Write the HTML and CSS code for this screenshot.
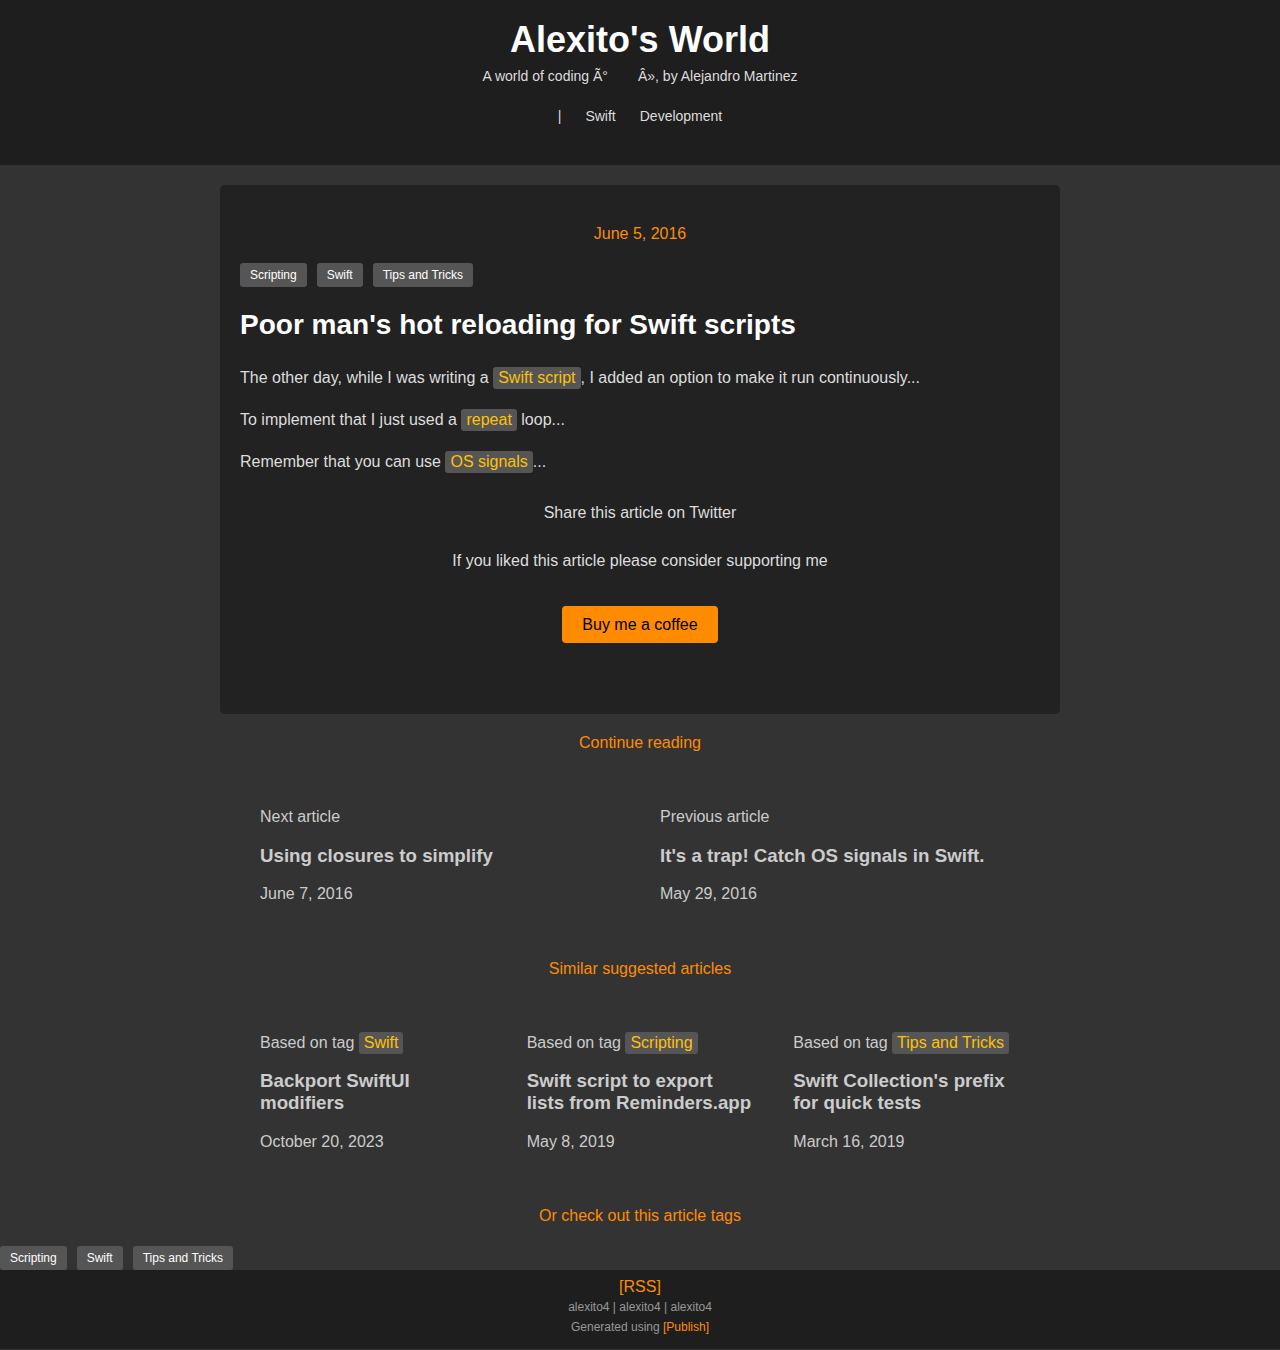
FILE: index.html
```html
<!DOCTYPE html>
<html>
<head>
<meta charset="utf-8">
<title>Alexito's World</title>
<link rel="stylesheet" href="styles.css">
</head>
<body>
<header class="site-header">
  <h1 class="site-title">Alexito's World</h1>
  <p class="site-subtitle">A world of coding Ã°<span class="gap"></span>Â», by Alejandro Martinez</p>
  <nav class="site-nav">
    <span>|</span>
    <a href="#">Swift</a>
    <a href="#">Development</a>
  </nav>
</header>

<main class="main">
  <article class="card">
    <div class="date">June 5, 2016</div>
    <ul class="tags">
      <li class="tag">Scripting</li>
      <li class="tag">Swift</li>
      <li class="tag">Tips and Tricks</li>
    </ul>
    <h2 class="post-title">Poor man's hot reloading for Swift scripts</h2>
    <p class="para">The other day, while I was writing a <span class="code">Swift script</span>, I added an option to make it run continuously...</p>
    <p class="para">To implement that I just used a <span class="code">repeat</span> loop...</p>
    <p class="para">Remember that you can use <span class="code">OS signals</span>...</p>
    <p class="share">Share this article on Twitter</p>
    <p class="support">If you liked this article please consider supporting me</p>
    <div class="btn-row"><a class="coffee" href="#">Buy me a coffee</a></div>
  </article>

  <h3 class="section-link">Continue reading</h3>
  <div class="nav-grid">
    <div class="item">
      <div class="label">Next article</div>
      <div class="item-title">Using closures to simplify</div>
      <div class="label">June 7, 2016</div>
    </div>
    <div class="item">
      <div class="label">Previous article</div>
      <div class="item-title">It's a trap! Catch OS signals in Swift.</div>
      <div class="label">May 29, 2016</div>
    </div>
  </div>

  <h3 class="section-link similar">Similar suggested articles</h3>
  <div class="sim-grid">
    <div class="item">
      <div class="label">Based on tag <span class="code">Swift</span></div>
      <div class="item-title">Backport SwiftUI modifiers</div>
      <div class="label">October 20, 2023</div>
    </div>
    <div class="item">
      <div class="label">Based on tag <span class="code">Scripting</span></div>
      <div class="item-title">Swift script to export lists from Reminders.app</div>
      <div class="label">May 8, 2019</div>
    </div>
    <div class="item">
      <div class="label">Based on tag <span class="code">Tips and Tricks</span></div>
      <div class="item-title">Swift Collection's prefix for quick tests</div>
      <div class="label">March 16, 2019</div>
    </div>
  </div>

  <h3 class="section-link tags-head">Or check out this article tags</h3>
</main>
<ul class="tags bottom-tags">
  <li class="tag">Scripting</li>
  <li class="tag">Swift</li>
  <li class="tag">Tips and Tricks</li>
</ul>

<footer class="site-footer">
  <a class="rss" href="#">[RSS]</a>
  <p class="foot-line">alexito4 | alexito4 | alexito4</p>
  <p class="foot-line">Generated using <a href="#">[Publish]</a></p>
</footer>
</body>
</html>
```

FILE: styles.css
```css
* { box-sizing: border-box; }
html, body {
  margin: 0;
  padding: 0;
  background: #333333;
  font-family: "Liberation Sans", Arial, sans-serif;
  color: #dddddd;
}
a { text-decoration: none; }

.site-header {
  background: #1e1e1e;
  text-align: center;
  padding: 19px 0 40px;
  height: 165px;
}
.site-title {
  margin: 0;
  font-size: 36px;
  line-height: 42px;
  color: #ffffff;
  font-weight: bold;
}
.site-subtitle {
  margin: 6px 0 0;
  font-size: 14px;
  line-height: 18px;
  color: #dddddd;
}
.gap { display: inline-block; width: 30px; }
.site-nav {
  margin-top: 22px;
  font-size: 14px;
  line-height: 18px;
  display: flex;
  justify-content: center;
  gap: 24px;
}
.site-nav span, .site-nav a { color: #dddddd; }

.main {
  width: 840px;
  margin: 0 auto;
  padding-top: 20px;
}
.card {
  background: #222222;
  border-radius: 5px;
  padding: 40px 20px 71px;
}
.date {
  text-align: center;
  color: #ff8c00;
  font-size: 16px;
  line-height: 18px;
}
.tags {
  list-style: none;
  margin: 20px 0 0;
  padding: 0;
  display: flex;
  gap: 10px;
}
.tag {
  background: #555555;
  color: #ffffff;
  font-size: 12px;
  height: 24px;
  line-height: 24px;
  padding: 0 10px;
  border-radius: 3px;
}
.post-title {
  margin: 20px 0 0;
  font-size: 28px;
  line-height: 36px;
  color: #ffffff;
  font-weight: bold;
}
.para {
  margin: 20px 0 0;
  font-size: 16px;
  line-height: 22px;
  color: #dddddd;
}
.post-title + .para { margin-top: 24px; }
.code {
  display: inline-block;
  background: #555555;
  color: #ffc107;
  padding: 0 5px;
  border-radius: 3px;
  line-height: 22px;
}
.share {
  margin: 30px 0 0;
  text-align: center;
  font-size: 16px;
  line-height: 20px;
}
.support {
  margin: 28px 0 0;
  text-align: center;
  font-size: 16px;
  line-height: 20px;
}
.btn-row {
  display: flex;
  justify-content: center;
  margin-top: 35px;
}
.coffee {
  display: block;
  background: #ff8c00;
  color: #000000;
  font-size: 16px;
  line-height: 37px;
  height: 37px;
  padding: 0 20px;
  border-radius: 4px;
}

.section-link {
  margin: 19px 0 0;
  text-align: center;
  color: #ff8c00;
  font-size: 16px;
  font-weight: normal;
  line-height: 20px;
}
.nav-grid {
  width: 800px;
  margin: 53px auto 0;
  display: grid;
  grid-template-columns: 1fr 1fr;
}
.sim-grid {
  width: 800px;
  margin: 53px auto 0;
  display: grid;
  grid-template-columns: 1fr 1fr 1fr;
}
.item {
  padding: 0 20px;
}
.label {
  font-size: 16px;
  line-height: 22px;
  color: #cccccc;
}
.item-title {
  margin: 17px 0 16px;
  font-size: 18.72px;
  line-height: 22px;
  font-weight: bold;
  color: #cccccc;
}
.sim-grid .item-title { margin: 16px 0 17px; }
.section-link.similar { margin-top: 54px; }
.section-link.tags-head { margin-top: 53px; }

.bottom-tags {
  margin: 20px 0 0;
}

.site-footer {
  background: #1e1e1e;
  text-align: center;
  padding: 7px 0 13px;
}
.rss {
  display: block;
  color: #ff8c00;
  font-size: 16px;
  line-height: 20px;
}
.foot-line {
  margin: 1px 0 0;
  font-size: 12px;
  line-height: 18px;
  color: #999999;
}
.foot-line + .foot-line { margin-top: 2px; }
.foot-line a { color: #ff8c00; }
```
